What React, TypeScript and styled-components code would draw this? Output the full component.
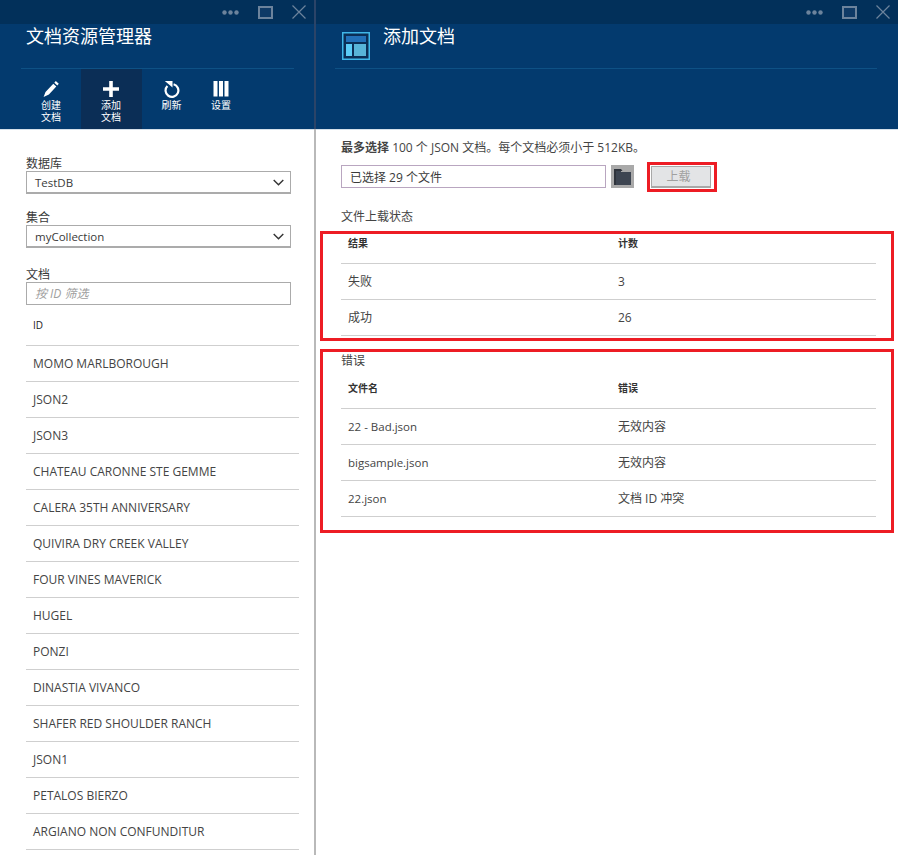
import React from "react";
import styled, { createGlobalStyle } from "styled-components";

const FONT = `"Open Sans", "Noto Sans CJK SC", sans-serif`;

const Global = createGlobalStyle`
  html, body { margin: 0; padding: 0; background: #fff; }
  body { width: 898px; height: 855px; overflow: hidden; font-family: ${FONT}; color: #3a3a3a; }
  * { box-sizing: border-box; }
`;

const Page = styled.div`
  display: flex;
  width: 898px;
  height: 855px;
  overflow: hidden;
`;

const LeftBlade = styled.section`
  width: 314px;
  flex: none;
  display: flex;
  flex-direction: column;
`;

const Divider = styled.div`
  width: 2px;
  flex: none;
  background: linear-gradient(to bottom, #2b4468 0, #2b4468 129px, #b9b9b9 129px);
`;

const RightBlade = styled.section`
  flex: 1;
  min-width: 0;
  display: flex;
  flex-direction: column;
`;

const Header = styled.header`
  height: 130px;
  flex: none;
  background: #033a6e;
  border-bottom: 1px solid #d5e0ea;
  display: flex;
  flex-direction: column;
`;

const TitleBar = styled.div`
  height: 24px;
  flex: none;
  background: #02305a;
  display: flex;
  align-items: center;
  justify-content: flex-end;
  color: #6c839c;
`;

const WinButton = styled.span<{ $w: number }>`
  width: ${(p) => p.$w}px;
  display: flex;
  justify-content: center;
  align-items: center;
`;

const TitleRow = styled.div<{ $left: number; $right: number }>`
  height: 45px;
  flex: none;
  margin: 0 ${(p) => p.$right}px 0 ${(p) => p.$left}px;
  border-bottom: 1px solid #0e5185;
  display: flex;
  align-items: flex-start;
`;

const BladeTitle = styled.h1<{ $ml: number }>`
  margin: 0 0 0 ${(p) => p.$ml}px;
  font-size: 18px;
  line-height: 25px;
  font-weight: 400;
  color: #fff;
`;

const BladeIcon = styled.svg`
  margin: 8px 0 0 7px;
  flex: none;
`;

const Toolbar = styled.div`
  display: flex;
  height: 60px;
  padding-left: 21px;
`;

const ToolButton = styled.div<{ $active?: boolean; $w?: number }>`
  width: ${(p) => p.$w ?? 60}px;
  flex: none;
  display: flex;
  flex-direction: column;
  align-items: center;
  padding: 12px ${(p) => (p.$active ? 1 : 0)}px 0 0;
  background: ${(p) => (p.$active ? "#0b2e56" : "transparent")};
  color: #fff;
`;

const ToolIcon = styled.svg`
  flex: none;
  margin-bottom: 2px;
`;

const RefreshIcon = styled(ToolIcon)`
  margin-bottom: 0;
`;

const ToolLabel = styled.span`
  width: 21px;
  font-size: 10px;
  line-height: 12px;
  text-align: center;
`;

const LeftBody = styled.div`
  padding: 26px 0 0 26px;
`;

const FieldLabel = styled.div`
  font-size: 12px;
  line-height: 15px;
  color: #3a3a3a;
`;

const Field = styled.div<{ $mb: number }>`
  margin-bottom: ${(p) => p.$mb}px;
  width: 265px;
`;

const SelectBox = styled.div`
  height: 23px;
  border: 1px solid #ababab;
  border-bottom-width: 2px;
  display: flex;
  align-items: center;
  justify-content: space-between;
  padding: 0 6px 0 8px;
  font-size: 11.5px;
  color: #3a3a3a;
`;

const FilterBox = styled.div`
  height: 23px;
  border: 1px solid #ababab;
  display: flex;
  align-items: center;
  padding: 0 8px 2px;
  font-size: 12px;
  font-style: italic;
  color: #a0a0a0;
`;

const DocList = styled.div`
  width: 273px;
`;

const DocHeader = styled.div`
  height: 41px;
  padding: 12px 0 0 7px;
  font-size: 10px;
  line-height: 16px;
  color: #222;
  border-bottom: 1px solid #cfcfcf;
`;

const DocRow = styled.div`
  height: 36px;
  padding: 0 0 1px 7px;
  display: flex;
  align-items: center;
  font-size: 12px;
  color: #444;
  border-bottom: 1px solid #cfcfcf;
`;

const RightBody = styled.div`
  padding: 9px 21px 0 25px;
`;

const Hint = styled.p`
  margin: 0 0 8px;
  font-size: 12px;
  line-height: 18px;
  color: #444;
  b { font-weight: 700; }
`;

const UploadRow = styled.div`
  display: flex;
  align-items: center;
  height: 23px;
`;

const FileBox = styled.div`
  width: 265px;
  height: 23px;
  border: 1px solid #b9a6c0;
  display: flex;
  align-items: center;
  padding: 0 8px;
  font-size: 12px;
  color: #3a3a3a;
`;

const FolderButton = styled.div`
  width: 23px;
  height: 23px;
  margin-left: 5px;
  background: #a9a9a9;
  display: flex;
  align-items: center;
  justify-content: center;
`;

const UploadMark = styled.div`
  margin-left: 13px;
  width: 70px;
  height: 30px;
  flex: none;
  border: 3px solid #ed1c24;
  padding-left: 1px;
  display: flex;
  align-items: center;
`;

const UploadButton = styled.div`
  width: 60px;
  height: 22px;
  background: #e3e4e6;
  border: 1px solid #a8a8a8;
  border-bottom-width: 2px;
  padding-right: 5px;
  font-size: 12px;
  color: #a0a0a0;
  display: flex;
  align-items: center;
  justify-content: center;
`;

const SectionLabel = styled.div`
  margin-top: 20px;
  font-size: 12px;
  line-height: 18px;
  color: #444;
`;

const Marked = styled.div<{ $mt: number; $h: number }>`
  margin: ${(p) => p.$mt}px -17px 0 -21px;
  height: ${(p) => p.$h}px;
  border: 3px solid #ed1c24;
  padding: 0 15px 0 18px;
`;

const Table = styled.div`
  display: grid;
  grid-template-columns: 270px 1fr;
`;

const HeadCell = styled.div<{ $h: number }>`
  height: ${(p) => p.$h}px;
  padding: ${(p) => p.$h - 29}px 0 0 7px;
  font-size: 10px;
  font-weight: 700;
  color: #333;
  line-height: 16px;
  border-bottom: 1px solid #cfcfcf;
`;

const Cell = styled.div<{ $latin?: boolean }>`
  height: 36px;
  padding: 0 0 1px 7px;
  display: flex;
  align-items: center;
  font-size: ${(p) => (p.$latin ? 11.5 : 12)}px;
  color: #444;
  border-bottom: 1px solid #cfcfcf;
`;

const ErrorTitle = styled.div`
  font-size: 12px;
  line-height: 16px;
  color: #444;
  padding-top: 1px;
  height: 17px;
`;

const WindowControls = () => (
  <>
    <WinButton $w={32}>
      <svg width="17" height="5" viewBox="0 0 17 5" fill="currentColor">
        <circle cx="2.5" cy="2.5" r="2.2" />
        <circle cx="8.5" cy="2.5" r="2.2" />
        <circle cx="14.500" cy="2.5" r="2.2" />
      </svg>
    </WinButton>
    <WinButton $w={38}>
      <svg width="15" height="13" viewBox="0 0 15 13" fill="#0f3a66" stroke="currentColor" strokeWidth="2">
        <rect x="1" y="1" width="13" height="11" />
      </svg>
    </WinButton>
    <WinButton $w={30}>
      <svg width="14" height="14" viewBox="0 0 14 14" fill="none" stroke="currentColor" strokeWidth="1.2">
        <path d="M.5.5l13 13M13.5.5l-13 13" />
      </svg>
    </WinButton>
  </>
);

const Chevron = () => (
  <svg width="11" height="7" viewBox="0 0 11 7" fill="none" stroke="#333" strokeWidth="1.4">
    <path d="M.7 1l4.8 4.8L10.3 1" />
  </svg>
);

const docs = [
  "MOMO MARLBOROUGH",
  "JSON2",
  "JSON3",
  "CHATEAU CARONNE STE GEMME",
  "CALERA 35TH ANNIVERSARY",
  "QUIVIRA DRY CREEK VALLEY",
  "FOUR VINES MAVERICK",
  "HUGEL",
  "PONZI",
  "DINASTIA VIVANCO",
  "SHAFER RED SHOULDER RANCH",
  "JSON1",
  "PETALOS BIERZO",
  "ARGIANO NON CONFUNDITUR",
];

const results = [
  ["失败", "3"],
  ["成功", "26"],
];

const errors = [
  ["22 - Bad.json", "无效内容"],
  ["bigsample.json", "无效内容"],
  ["22.json", "文档 ID 冲突"],
];

export default function App() {
  return (
    <Page>
      <Global />
      <LeftBlade>
        <Header>
          <TitleBar>
            <WindowControls />
          </TitleBar>
          <TitleRow $left={21} $right={20}>
            <BladeTitle $ml={5}>文档资源管理器</BladeTitle>
          </TitleRow>
          <Toolbar>
            <ToolButton>
              <ToolIcon width="16" height="16" viewBox="0 0 16 16" fill="#fff">
                <path d="M12.8 0l3 2.7-1.500 1.800-3-2.700zM10.300 2.800l3 2.700-7.400 8.100L.6 16l1.900-5z" />
              </ToolIcon>
              <ToolLabel>创建文档</ToolLabel>
            </ToolButton>
            <ToolButton $active $w={61}>
              <ToolIcon width="16" height="16" viewBox="0 0 16 16" fill="#fff">
                <path d="M6.200 0h3.600v6.200H16v3.600H9.800V16H6.200V9.800H0V6.200h6.200z" />
              </ToolIcon>
              <ToolLabel>添加文档</ToolLabel>
            </ToolButton>
            <ToolButton $w={59}>
              <RefreshIcon width="16" height="18" viewBox="0 0 16 18" fill="none">
                <path d="M9.600 3.300A6.400 6.400 0 1 1 3.400 5" stroke="#fff" strokeWidth="2.2" />
                <path d="M.8 0h7.700v6.500z" fill="#fff" />
              </RefreshIcon>
              <ToolLabel>刷新</ToolLabel>
            </ToolButton>
            <ToolButton $w={40}>
              <ToolIcon width="16" height="16" viewBox="0 0 16 16" fill="#fff">
                <path d="M.5 0h4v15.500h-4zM6 0h4v15.500H6zM11.500 0h4v15.500h-4z" />
              </ToolIcon>
              <ToolLabel>设置</ToolLabel>
            </ToolButton>
          </Toolbar>
        </Header>
        <LeftBody>
          <Field $mb={16}>
            <FieldLabel>数据库</FieldLabel>
            <SelectBox>
              TestDB
              <Chevron />
            </SelectBox>
          </Field>
          <Field $mb={19}>
            <FieldLabel>集合</FieldLabel>
            <SelectBox>
              myCollection
              <Chevron />
            </SelectBox>
          </Field>
          <Field $mb={0}>
            <FieldLabel>文档</FieldLabel>
            <FilterBox>按 ID 筛选</FilterBox>
          </Field>
          <DocList>
            <DocHeader>ID</DocHeader>
            {docs.map((d) => (
              <DocRow key={d}>{d}</DocRow>
            ))}
          </DocList>
        </LeftBody>
      </LeftBlade>
      <Divider />
      <RightBlade>
        <Header>
          <TitleBar>
            <WindowControls />
          </TitleBar>
          <TitleRow $left={19} $right={21}>
            <BladeIcon width="28" height="28" viewBox="0 0 28 28">
              <rect x=".75" y=".75" width="26.5" height="26.5" fill="#0b2e56" stroke="#3fb6e8" strokeWidth="1.5" />
              <rect x="4" y="4" width="20" height="6" fill="#2270b8" />
              <rect x="4" y="12" width="6" height="12" fill="#5bcbf5" />
              <rect x="12" y="12" width="12" height="12" fill="#58b4d8" />
            </BladeIcon>
            <BladeTitle $ml={13}>添加文档</BladeTitle>
          </TitleRow>
        </Header>
        <RightBody>
          <Hint>
            <b>最多选择</b> 100 个 JSON 文档。每个文档必须小于 512KB。
          </Hint>
          <UploadRow>
            <FileBox>已选择 29 个文件</FileBox>
            <FolderButton>
              <svg width="17" height="16" viewBox="0 0 17 16">
                <path d="M0 0h7v3h10v13H0z" fill="#3d4551" />
                <path d="M0 0h7l1.500 2H2v14H0z" fill="#2f343c" />
              </svg>
            </FolderButton>
            <UploadMark>
              <UploadButton>上载</UploadButton>
            </UploadMark>
          </UploadRow>
          <SectionLabel>文件上载状态</SectionLabel>
          <Marked $mt={5} $h={110}>
            <Table>
              <HeadCell $h={30}>结果</HeadCell>
              <HeadCell $h={30}>计数</HeadCell>
              {results.flat().map((c, i) => (
                <Cell key={i}>{c}</Cell>
              ))}
            </Table>
          </Marked>
          <Marked $mt={8} $h={184}>
            <ErrorTitle>错误</ErrorTitle>
            <Table>
              <HeadCell $h={40}>文件名</HeadCell>
              <HeadCell $h={40}>错误</HeadCell>
              {errors.flat().map((c, i) => (
                <Cell key={i} $latin={i % 2 === 0}>
                  {c}
                </Cell>
              ))}
            </Table>
          </Marked>
        </RightBody>
      </RightBlade>
    </Page>
  );
}
